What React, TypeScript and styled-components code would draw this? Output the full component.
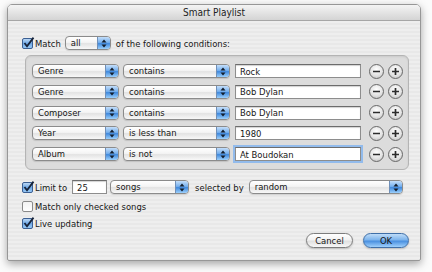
import styled, { createGlobalStyle } from 'styled-components';

const GlobalStyle = createGlobalStyle`
  html, body {
    margin: 0;
    padding: 0;
    background: #fbfbfb;
  }
  body {
    font-family: "DejaVu Sans Condensed", "DejaVu Sans", sans-serif;
    font-size: 9.4px;
    color: #161616;
  }
`;

const Page = styled.div`
  width: 432px;
  height: 272px;
  box-sizing: border-box;
  padding: 4px 0 0 7px;
`;

const Window = styled.div`
  width: 414px;
  height: 257px;
  box-sizing: border-box;
  border: 1px solid #979797;
  border-radius: 5px 5px 2px 2px;
  background: repeating-linear-gradient(#eeeeee 0 2px, #e8e8e8 2px 4px);
  box-shadow: 0 3px 8px rgba(0, 0, 0, 0.35);
  display: flex;
  flex-direction: column;
  overflow: hidden;
`;

const TitleBar = styled.div`
  height: 15px;
  flex: none;
  display: flex;
  align-items: center;
  justify-content: center;
  background: linear-gradient(#f4f4f4, #d4d4d4);
  border-bottom: 1px solid #a6a6a6;
  color: #1c1c1c;
  font-size: 10px;
`;

const Content = styled.div`
  flex: 1;
  display: flex;
  flex-direction: column;
  padding: 15px 11px 12px 14px;
`;

const Row = styled.div`
  display: flex;
  align-items: center;
  height: 14px;
  flex: none;
`;

const CheckLabel = styled.label`
  display: flex;
  align-items: center;
  gap: 0;
  white-space: nowrap;
`;

const Text = styled.span<{ $ml?: number; $mr?: number }>`
  white-space: nowrap;
  margin-left: ${(p) => p.$ml ?? 0}px;
  margin-right: ${(p) => p.$mr ?? 0}px;
`;

const Popup = styled.div<{ $w: number; $ml?: number }>`
  width: ${(p) => p.$w}px;
  margin-left: ${(p) => p.$ml ?? 0}px;
  height: 14px;
  box-sizing: border-box;
  flex: none;
  display: flex;
  border: 1px solid #8b8b8b;
  border-radius: 4px;
  overflow: hidden;
  background: linear-gradient(#ffffff, #f4f4f4 45%, #e3e3e3 55%, #f8f8f8);
  box-shadow: 0 1px 1px rgba(0, 0, 0, 0.12);
`;

const PopupText = styled.span`
  flex: 1;
  padding-left: 5px;
  line-height: 12px;
  white-space: nowrap;
  overflow: hidden;
`;

const PopupArrows = styled.span`
  width: 12px;
  flex: none;
  display: flex;
  align-items: center;
  justify-content: center;
  border-left: 1px solid #6f8fb8;
  background: linear-gradient(#c4defa, #76b0ee 45%, #4089dd 55%, #9cd0fc);
`;

const ConditionsBox = styled.div`
  width: 384px;
  height: 115px;
  box-sizing: border-box;
  margin: 5px 0 0 3px;
  padding: 8px 5px 8px 6px;
  border: 1px solid #b4b4b4;
  border-radius: 6px;
  background: #dcdcdc;
  box-shadow: inset 0 1px 2px rgba(0, 0, 0, 0.08);
  display: flex;
  flex-direction: column;
  justify-content: space-between;
`;

const TextField = styled.input<{ $w: number; $ml?: number; $focused?: boolean }>`
  width: ${(p) => p.$w}px;
  margin-left: ${(p) => p.$ml ?? 0}px;
  height: 14px;
  box-sizing: border-box;
  flex: none;
  padding: 0 4px;
  border: 1px solid #8d8d8d;
  border-top-color: #6c6c6c;
  background: #fff;
  font: inherit;
  color: #161616;
  outline: none;
  box-shadow: ${(p) =>
    p.$focused ? '0 0 0 2px #92bbec' : 'inset 0 1px 1px rgba(0, 0, 0, 0.18)'};
`;

const RoundButton = styled.span<{ $ml?: number }>`
  width: 15px;
  height: 15px;
  margin-left: ${(p) => p.$ml ?? 0}px;
  box-sizing: border-box;
  flex: none;
  border-radius: 50%;
  border: 1px solid #686868;
  background: radial-gradient(circle at 50% 35%, #ffffff, #e4e4e4 55%, #b9b9b9);
  display: flex;
  align-items: center;
  justify-content: center;
`;

const OptionRow = styled(Row)<{ $mt: number }>`
  margin-top: ${(p) => p.$mt}px;
  height: 12px;
`;

const Footer = styled.div`
  margin-top: auto;
  display: flex;
  justify-content: flex-end;
  gap: 10px;
`;

const PushButton = styled.div<{ $w: number; $primary?: boolean }>`
  width: ${(p) => p.$w}px;
  height: 15px;
  box-sizing: border-box;
  border-radius: 8px;
  border: 1px solid ${(p) => (p.$primary ? '#3f6fa8' : '#7c7c7c')};
  background: ${(p) =>
    p.$primary
      ? 'linear-gradient(#bfdcf8, #7db4ec 45%, #4a90e0 55%, #9fd0fc)'
      : 'linear-gradient(#ffffff, #f2f2f2 45%, #e0e0e0 55%, #f7f7f7)'};
  box-shadow: 0 1px 2px rgba(0, 0, 0, 0.2);
  display: flex;
  align-items: center;
  justify-content: center;
  line-height: 13px;
`;

const Arrows = () => (
  <svg width="6" height="9" viewBox="0 0 6 9">
    <path d="M3 0.5 L5.5 3.5 H0.5 Z" fill="#141e2c" />
    <path d="M3 8.5 L5.5 5.5 H0.5 Z" fill="#141e2c" />
  </svg>
);

const CheckBox = ({ checked }: { checked: boolean }) => (
  <svg width="13" height="12" viewBox="0 0 13 12">
    <defs>
      <linearGradient id="cb-blue" x1="0" y1="0" x2="0" y2="1">
        <stop offset="0" stopColor="#c3dcf6" />
        <stop offset="0.5" stopColor="#6ea8e6" />
        <stop offset="1" stopColor="#9cccf7" />
      </linearGradient>
      <linearGradient id="cb-white" x1="0" y1="0" x2="0" y2="1">
        <stop offset="0" stopColor="#f2f2f2" />
        <stop offset="1" stopColor="#ffffff" />
      </linearGradient>
    </defs>
    <rect
      x="0.5"
      y="1.5"
      width="10"
      height="10"
      rx="1.5"
      fill={checked ? 'url(#cb-blue)' : 'url(#cb-white)'}
      stroke={checked ? '#3b5f92' : '#8a8a8a'}
    />
    {checked && (
      <path d="M2.5 6 L5 9.2 L11.5 0.6" fill="none" stroke="#162238" strokeWidth="1.8" />
    )}
  </svg>
);

const Minus = () => (
  <svg width="9" height="9" viewBox="0 0 9 9">
    <line x1="1" y1="4.5" x2="8" y2="4.5" stroke="#2b2b2b" strokeWidth="1.7" />
  </svg>
);

const Plus = () => (
  <svg width="9" height="9" viewBox="0 0 9 9">
    <line x1="1" y1="4.5" x2="8" y2="4.5" stroke="#2b2b2b" strokeWidth="1.7" />
    <line x1="4.5" y1="1" x2="4.5" y2="8" stroke="#2b2b2b" strokeWidth="1.7" />
  </svg>
);

const PopupButton = ({ label, w, ml }: { label: string; w: number; ml?: number }) => (
  <Popup $w={w} $ml={ml}>
    <PopupText>{label}</PopupText>
    <PopupArrows>
      <Arrows />
    </PopupArrows>
  </Popup>
);

const conditions = [
  { field: 'Genre', op: 'contains', value: 'Rock' },
  { field: 'Genre', op: 'contains', value: 'Bob Dylan' },
  { field: 'Composer', op: 'contains', value: 'Bob Dylan' },
  { field: 'Year', op: 'is less than', value: '1980' },
  { field: 'Album', op: 'is not', value: 'At Boudokan', focused: true },
];

const App = () => (
  <Page>
    <GlobalStyle />
    <Window>
      <TitleBar>Smart Playlist</TitleBar>
      <Content>
        <Row>
          <CheckLabel>
            <CheckBox checked />
            Match
          </CheckLabel>
          <PopupButton label="all" w={46} ml={4} />
          <Text $ml={5}>of the following conditions:</Text>
        </Row>

        <ConditionsBox>
          {conditions.map((c, i) => (
            <Row key={i}>
              <PopupButton label={c.field} w={87} />
              <PopupButton label={c.op} w={107} ml={4} />
              <TextField $w={126} $ml={5} $focused={c.focused} defaultValue={c.value} readOnly />
              <RoundButton $ml={8}>
                <Minus />
              </RoundButton>
              <RoundButton $ml={4}>
                <Plus />
              </RoundButton>
            </Row>
          ))}
        </ConditionsBox>

        <Row style={{ marginTop: 10 }}>
          <CheckLabel>
            <CheckBox checked />
            Limit to
          </CheckLabel>
          <TextField $w={35} $ml={5} defaultValue="25" readOnly />
          <PopupButton label="songs" w={79} ml={3} />
          <Text $ml={6} $mr={5}>
            selected by
          </Text>
          <PopupButton label="random" w={154} />
        </Row>

        <OptionRow $mt={6}>
          <CheckLabel>
            <CheckBox checked={false} />
            Match only checked songs
          </CheckLabel>
        </OptionRow>
        <OptionRow $mt={5}>
          <CheckLabel>
            <CheckBox checked />
            Live updating
          </CheckLabel>
        </OptionRow>

        <Footer>
          <PushButton $w={47}>Cancel</PushButton>
          <PushButton $w={46} $primary>
            OK
          </PushButton>
        </Footer>
      </Content>
    </Window>
  </Page>
);

export default App;
